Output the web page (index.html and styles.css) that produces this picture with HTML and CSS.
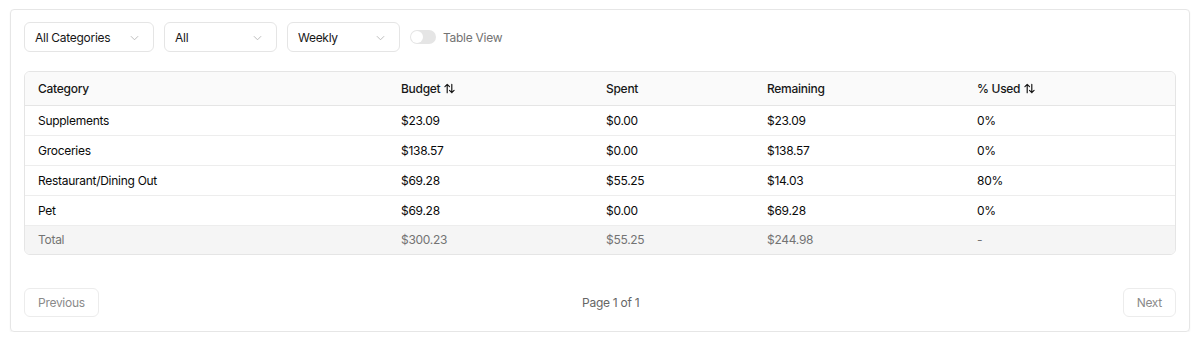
FILE: index.html
```html
<!DOCTYPE html>
<html>
<head>
<meta charset="utf-8">
<link rel="stylesheet" href="styles.css">
</head>
<body>
<div class="card">
  <div class="toolbar">
    <div class="select w-cat"><span>All Categories</span><svg class="chev" viewBox="0 0 10 6" width="9" height="6"><path d="M1 1l4 4 4-4" fill="none" stroke="#b5b5b5" stroke-width="1"/></svg></div>
    <div class="select w-all"><span>All</span><svg class="chev" viewBox="0 0 10 6" width="9" height="6"><path d="M1 1l4 4 4-4" fill="none" stroke="#b5b5b5" stroke-width="1"/></svg></div>
    <div class="select w-week"><span>Weekly</span><svg class="chev" viewBox="0 0 10 6" width="9" height="6"><path d="M1 1l4 4 4-4" fill="none" stroke="#b5b5b5" stroke-width="1"/></svg></div>
    <div class="toggle"><span class="knob"></span></div>
    <span class="toggle-label">Table View</span>
  </div>
  <div class="table-wrap">
    <table>
      <colgroup>
        <col class="c1"><col class="c2"><col class="c3"><col class="c4"><col class="c5">
      </colgroup>
      <thead>
        <tr>
          <th>Category</th>
          <th>Budget <svg class="sort" viewBox="0 0 12 12" width="11" height="11"><path d="M3.5 10.5V1.5M1 4l2.5-2.5L6 4M8.5 1.5v9M6 8l2.5 2.5L11 8" fill="none" stroke="#171717" stroke-width="1.3" stroke-linecap="round" stroke-linejoin="round"/></svg></th>
          <th>Spent</th>
          <th>Remaining</th>
          <th>% Used <svg class="sort" viewBox="0 0 12 12" width="11" height="11"><path d="M3.5 10.5V1.5M1 4l2.5-2.5L6 4M8.5 1.5v9M6 8l2.5 2.5L11 8" fill="none" stroke="#171717" stroke-width="1.3" stroke-linecap="round" stroke-linejoin="round"/></svg></th>
        </tr>
      </thead>
      <tbody>
        <tr><td>Supplements</td><td>$23.09</td><td>$0.00</td><td>$23.09</td><td>0%</td></tr>
        <tr><td>Groceries</td><td>$138.57</td><td>$0.00</td><td>$138.57</td><td>0%</td></tr>
        <tr><td>Restaurant/Dining Out</td><td>$69.28</td><td>$55.25</td><td>$14.03</td><td>80%</td></tr>
        <tr><td>Pet</td><td>$69.28</td><td>$0.00</td><td>$69.28</td><td>0%</td></tr>
        <tr class="total"><td>Total</td><td>$300.23</td><td>$55.25</td><td>$244.98</td><td>-</td></tr>
      </tbody>
    </table>
  </div>
  <div class="pager">
    <button class="btn">Previous</button>
    <span class="page-info">Page 1 of 1</span>
    <button class="btn">Next</button>
  </div>
</div>
</body>
</html>
```
FILE: styles.css
```css
* { box-sizing: border-box; }
body {
  margin: 0;
  background: #fff;
  font-family: Inter, "Liberation Sans", sans-serif;
  font-size: 12px;
  letter-spacing: -0.28px;
  color: #171717;
}
.card {
  margin: 9px 10px 0 10px;
  width: 1180px;
  height: 323px;
  border: 1px solid #e6e6e6;
  border-radius: 4px;
  box-shadow: 0 1px 2px rgba(0,0,0,0.06);
  padding: 12px 13px 0 13px;
}
.toolbar {
  display: flex;
  align-items: center;
  height: 30px;
}
.select {
  height: 30px;
  border: 1px solid #e5e5e5;
  border-radius: 6px;
  display: flex;
  align-items: center;
  justify-content: space-between;
  padding: 0 14px 0 10px;
  margin-right: 10px;
  color: #171717;
}
.w-cat { width: 130px; }
.w-all { width: 113px; }
.w-week { width: 113px; }
.chev { display: block; margin-top: 1px; }
.toggle {
  width: 26px;
  height: 14px;
  border-radius: 7px;
  background: #e5e5e5;
  position: relative;
  margin-right: 7px;
}
.knob {
  position: absolute;
  left: 1px;
  top: 1px;
  width: 12px;
  height: 12px;
  border-radius: 50%;
  background: #fff;
}
.toggle-label { color: #737373; }
.table-wrap {
  margin-top: 19px;
  border: 1px solid #e5e5e5;
  border-radius: 6px;
  overflow: hidden;
}
table {
  width: 100%;
  border-collapse: collapse;
  table-layout: fixed;
}
.c1 { width: 363px; }
.c2 { width: 205px; }
.c3 { width: 161px; }
.c4 { width: 210px; }
.c5 { width: auto; }
th, td {
  text-align: left;
  padding: 0 13px;
  white-space: nowrap;
}
th {
  height: 33px;
  font-weight: 500;
  background: #fafafa;
  border-bottom: 1px solid #e5e5e5;
}
td {
  height: 30px;
  border-bottom: 1px solid #ededed;
  color: #0a0a0a;
}
.sort { vertical-align: -1px; margin-left: 1px; }
tr.total td {
  background: #f5f5f5;
  color: #737373;
  border-bottom: none;
  height: 29px;
}
.pager {
  margin-top: 33px;
  display: flex;
  align-items: center;
  justify-content: space-between;
}
.btn {
  font-family: inherit;
  font-size: 12px;
  letter-spacing: inherit;
  height: 29px;
  padding: 0 13px;
  background: #fff;
  border: 1px solid #ececec;
  border-radius: 6px;
  color: #8a8a8a;
}
.page-info { color: #666; }
```
